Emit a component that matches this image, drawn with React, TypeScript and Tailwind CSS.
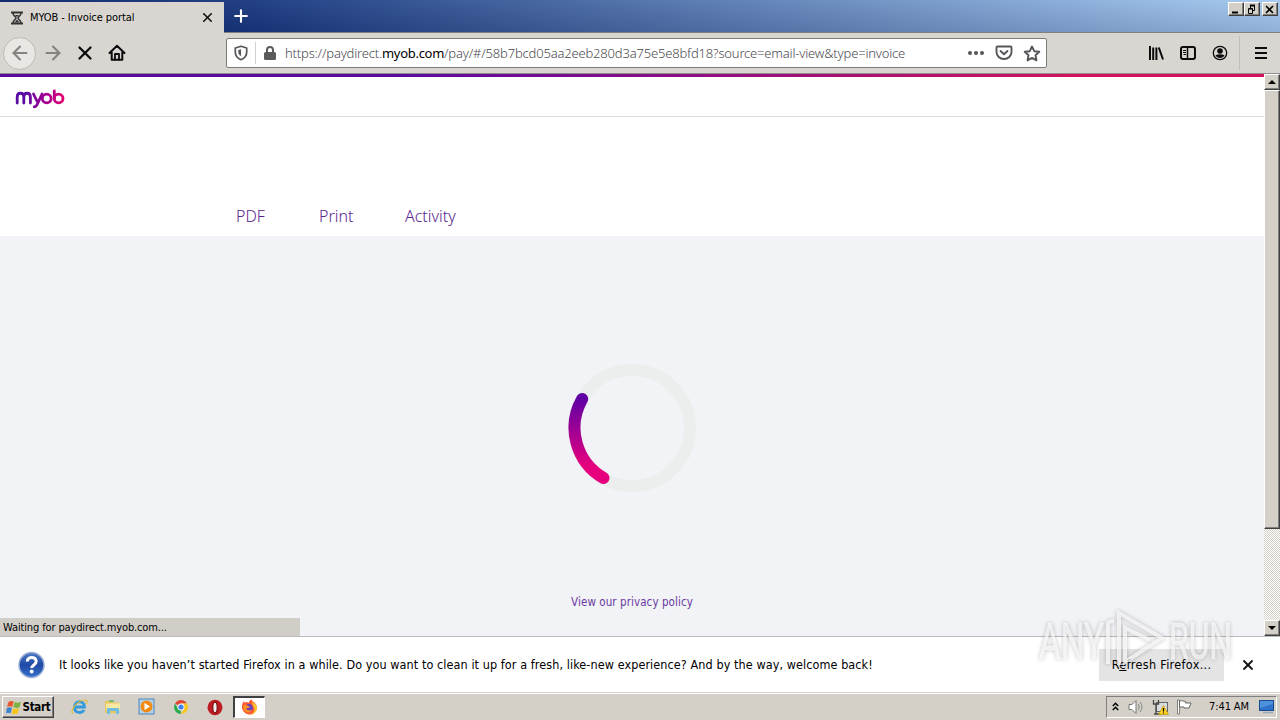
import type { ReactNode } from "react";
import { X, Plus, ArrowLeft, ArrowRight } from "lucide-react";

const NAV_LINKS = [
  { label: "PDF", className: "w-[83px]" },
  { label: "Print", className: "w-[86px]" },
  { label: "Activity", className: "w-[80px]" },
];

function RaisedButton({ className, children }: { className: string; children: ReactNode }) {
  return (
    <div
      className={`flex shrink-0 items-center justify-center border border-t-white border-l-white border-r-[#404040] border-b-[#404040] bg-[#d4d0c8] shadow-[inset_-1px_-1px_0_#808080] ${className}`}
    >
      {children}
    </div>
  );
}

function WindowControls() {
  return (
    <div className="flex pt-[2px] pr-[2px]">
      <RaisedButton className="h-[14px] w-4">
        <svg width="12" height="11" viewBox="0 0 12 11"><path d="M2 8.5h6" stroke="#000" strokeWidth="2" /></svg>
      </RaisedButton>
      <RaisedButton className="h-[14px] w-4">
        <svg width="12" height="11" viewBox="0 0 12 11" fill="none" stroke="#000">
          <path d="M4 1.5h5M4.500 1v3M8.500 1v5.500H7M2.500 5v4.500h4V4.500h-4M2 5h5" />
          <path d="M4 1.500h5" strokeWidth="2" />
        </svg>
      </RaisedButton>
      <RaisedButton className="ml-[2px] h-[14px] w-4">
        <svg width="12" height="11" viewBox="0 0 12 11"><path d="M2 2l7 7M9 2L2 9" stroke="#000" strokeWidth="1.700" /></svg>
      </RaisedButton>
    </div>
  );
}

function TabBar() {
  return (
    <div className="flex h-[33px] shrink-0 border-b border-[#808080] bg-[linear-gradient(180deg,rgba(255,255,255,0.04),rgba(0,0,40,0.13)),linear-gradient(90deg,#0a246a_0%,#1b3a80_20%,#a6caf0_100%)]">
      <div className="mt-[2px] flex h-[31px] w-[224px] items-center bg-[#d9d6d1] pr-[10px] pl-[10px]">
        <svg width="14" height="14" viewBox="0 0 14 14" fill="none" stroke="#333" className="shrink-0">
          <path d="M1 1.500h12M1 12.500h12" strokeWidth="2" />
          <path d="M3 2c0 3 3 3.500 3 5s-3 2-3 5M11 2c0 3-3 3.500-3 5s3 2 3 5" strokeWidth="1.500" />
          <path d="M5 4h4L7 6zM7 8.500l2.500 3h-5z" fill="#333" stroke="none" />
        </svg>
        <span className="ml-[6px] pt-px text-[11px] tracking-[-0.080px] whitespace-nowrap text-black">MYOB - Invoice portal</span>
        <X size={15} strokeWidth={2.600} className="mr-[-1px] mb-px ml-auto text-[#111]" />
      </div>
      <Plus size={20} strokeWidth={2.500} className="mt-[6px] ml-[7px] text-white" />
      <div className="ml-auto">
        <WindowControls />
      </div>
    </div>
  );
}

function AddressBar() {
  return (
    <div className="flex h-[30px] w-[821px] items-center rounded-[2px] border border-[#7b7b78] bg-white">
      <svg width="14" height="16" viewBox="0 0 14 16" fill="none" stroke="#55555a" strokeWidth="1.700" className="ml-[7px]">
        <path d="M7 1.300L12.700 3v4c0 4-2.500 6.400-5.700 7.700C3.800 13.400 1.300 11 1.300 7V3z" strokeLinejoin="round" />
        <path d="M7 4.200v7C5 10 4.300 8.600 4.300 7V5z" fill="#55555a" stroke="none" />
      </svg>
      <div className="ml-[7px] h-[22px] w-px bg-[#d0d0d0]" />
      <svg width="12" height="14" viewBox="0 0 12 14" className="ml-2">
        <rect y="6" width="12" height="8" rx="1.500" fill="#5a5a5c" />
        <path d="M3 7V4a3 3 0 016 0v3" fill="none" stroke="#5a5a5c" strokeWidth="2" />
      </svg>
      <span className="ml-[9px] pt-[2px] font-['Noto_Sans'] text-[13px] font-light tracking-[-0.175px] whitespace-nowrap text-[#4a4a50]">
        https://paydirect.<span className="font-normal tracking-[-0.300px] text-black">myob.com</span>
        /pay/#/58b7bcd05aa2eeb280d3a75e5e8bfd18?source=email-view&amp;type=invoice
      </span>
      <div className="mr-[5px] ml-auto flex shrink-0 items-center gap-[10px]">
        <svg width="18" height="6" viewBox="0 0 18 6" fill="#55555a">
          <circle cx="3" cy="3" r="2" /><circle cx="9" cy="3" r="2" /><circle cx="15" cy="3" r="2" />
        </svg>
        <svg width="18" height="16" viewBox="0 0 18 16" fill="none" stroke="#55555a" strokeWidth="1.900" strokeLinecap="round" strokeLinejoin="round">
          <path d="M2.500 1.500h13a1 1 0 011 1V7a7.500 7 0 01-15 0V2.500a1 1 0 011-1z" />
          <path d="M5.500 6L9 9.200 12.500 6" />
        </svg>
        <svg width="18" height="17" viewBox="0 0 18 17" fill="none" stroke="#55555a" strokeWidth="1.900" strokeLinejoin="round">
          <path d="M9 1.500l2.200 4.700 5.100.6-3.800 3.500 1 5.100L9 12.900l-4.500 2.500 1-5.100-3.800-3.500 5.100-.6z" />
        </svg>
      </div>
    </div>
  );
}

function Toolbar() {
  return (
    <div className="flex h-[41px] shrink-0 items-center border-b border-[#908e8a] bg-[#d9d6d1]">
      <div className="ml-[3px] flex size-[33px] items-center justify-center rounded-full border border-[#bdbab5] bg-[#e9e7e3]">
        <ArrowLeft size={22} strokeWidth={2.300} className="text-[#85837f]" />
      </div>
      <ArrowRight size={22} strokeWidth={2.300} className="ml-[6px] text-[#85837f]" />
      <X size={22} strokeWidth={2.500} className="ml-[10px] text-[#0c0c0d]" />
      <svg width="18" height="18" viewBox="0 0 18 18" fill="none" stroke="#0c0c0d" strokeWidth="2" strokeLinejoin="round" strokeLinecap="round" className="ml-3">
        <path d="M1.500 9L9 1.800 16.500 9M3.700 8.500v7.200h10.600V8.500" />
        <path d="M7 15.500V10h4v5.500" strokeWidth="1.800" />
      </svg>
      <div className="ml-[100px]">
        <AddressBar />
      </div>
      <svg width="16" height="16" viewBox="0 0 16 16" stroke="#0c0c0d" strokeWidth="2" className="ml-[101px]">
        <path d="M2 1v14M5.200 2.500V15M8.400 2.500V15M10.800 2.500L15 14.500" />
      </svg>
      <svg width="16" height="14" viewBox="0 0 16 14" fill="none" stroke="#0c0c0d" className="ml-4">
        <rect x="1" y="1" width="14" height="12" rx="2" strokeWidth="2" />
        <path d="M7.500 1v12" strokeWidth="1.500" />
        <path d="M3 4.500h3M3 6.500h3M3.500 8.500H6" strokeWidth="1" />
      </svg>
      <svg width="16" height="16" viewBox="0 0 16 16" className="ml-4">
        <circle cx="8" cy="8" r="6.700" fill="none" stroke="#0c0c0d" strokeWidth="1.300" />
        <circle cx="8" cy="6" r="2.800" fill="#0c0c0d" />
        <path d="M3.500 10.200C6 8.800 10 8.800 12.500 10.200 11.500 12 10 13 8 13s-3.500-1-4.500-2.800z" fill="#0c0c0d" />
      </svg>
      <div className="ml-[11px] h-[34px] w-px bg-[#c2bfb9]" />
      <svg width="12" height="12" viewBox="0 0 12 12" stroke="#0c0c0d" strokeWidth="2" className="ml-[15px]">
        <path d="M0 1h12M0 6h12M0 11h12" />
      </svg>
    </div>
  );
}

function Spinner() {
  return (
    <svg width="136" height="136" viewBox="0 0 136 136" fill="none" strokeWidth="12">
      <defs>
        <linearGradient id="arc" x1="0" y1="39" x2="0" y2="118" gradientUnits="userSpaceOnUse">
          <stop stopColor="#6100a5" />
          <stop offset="0.850" stopColor="#e6007e" />
        </linearGradient>
      </defs>
      <circle cx="68" cy="68" r="58" stroke="#eceeee" />
      <path d="M18.200 39A58 58 0 0039.500 118" stroke="url(#arc)" strokeLinecap="round" />
    </svg>
  );
}

function Scrollbar() {
  return (
    <div className="flex w-4 shrink-0 flex-col bg-[repeating-conic-gradient(#ffffff_0_25%,#d4d0c8_0_50%)] bg-[length:2px_2px]">
      <RaisedButton className="h-4 w-4">
        <svg width="8" height="4" viewBox="0 0 8 4"><path d="M0 4l4-4 4 4z" /></svg>
      </RaisedButton>
      <RaisedButton className="h-[439px] w-4">{null}</RaisedButton>
      <RaisedButton className="mt-auto h-4 w-4">
        <svg width="8" height="4" viewBox="0 0 8 4"><path d="M0 0l4 4 4-4z" /></svg>
      </RaisedButton>
    </div>
  );
}

function Page() {
  return (
    <div className="relative flex h-[562px] shrink-0">
      <main className="flex flex-1 flex-col bg-white">
        <div className="h-[3px] shrink-0 bg-[linear-gradient(90deg,#5b0aa0_0%,#5b0aa0_32%,#d0125f_84%,#d0125f_100%)]" />
        <header className="flex h-10 shrink-0 border-b border-[#dedede] pl-[15px]">
          <svg width="52" height="36" viewBox="0 0 52 36" fill="none" stroke="url(#logo)" strokeWidth="2.800" strokeLinecap="round" strokeLinejoin="round">
            <defs>
              <linearGradient id="logo" x1="0" y1="0" x2="50" y2="0" gradientUnits="userSpaceOnUse">
                <stop offset="0.200" stopColor="#5b0ba5" />
                <stop offset="0.600" stopColor="#a20092" />
                <stop offset="1" stopColor="#e6006e" />
              </linearGradient>
            </defs>
            <path d="M2.200 26v-6c0-5 6.600-5 6.600 0v6M8.800 20c0-5 6.600-5 6.600 0v6" />
            <path d="M18.500 17l4.200 8.500M27 17l-4.800 10.500c-.8 1.700-1.600 2.300-3 2.300" />
            <circle cx="31.700" cy="21.500" r="4.400" />
            <path d="M39.300 14v7.500" />
            <circle cx="43.600" cy="21.500" r="4.400" />
          </svg>
        </header>
        <nav className="flex h-[119px] shrink-0 items-end pb-[9px] pl-[236px] font-['Noto_Sans'] text-[16px] leading-[22px] font-light text-[#5a2590]">
          {NAV_LINKS.map((link) => (
            <a key={link.label} className={link.className}>{link.label}</a>
          ))}
        </nav>
        <section className="flex flex-1 flex-col items-center bg-[#f1f3f6] pt-[124px]">
          <Spinner />
          <a className="mt-[98px] text-[11.500px] leading-4 tracking-[0.080px] text-[#6a3aa0]">View our privacy policy</a>
        </section>
      </main>
      <Scrollbar />
      <div className="absolute bottom-0 left-0 flex h-[18px] w-[300px] items-center bg-[#d1cec7] pt-[3px] pl-[3px] text-[11px] tracking-[-0.130px] text-black">
        Waiting for paydirect.myob.com...
      </div>
    </div>
  );
}

function Notification() {
  return (
    <div className="flex h-[57px] shrink-0 items-center border-t border-[#bcbcbc] bg-white">
      <svg width="28" height="28" viewBox="0 0 28 28" className="ml-[18px]">
        <defs>
          <linearGradient id="help" x1="0" y1="0" x2="0" y2="1">
            <stop stopColor="#5179c4" /><stop offset="0.500" stopColor="#1e49a4" /><stop offset="1" stopColor="#3771cb" />
          </linearGradient>
        </defs>
        <circle cx="13.500" cy="14" r="12.500" fill="url(#help)" stroke="#9bb0d5" strokeWidth="1.500" />
        <path d="M9.200 10.500c.2-5.500 9-5.300 9 0 0 3.500-4.500 3.300-4.500 6.500" fill="none" stroke="#fff" strokeWidth="3" />
        <circle cx="13.700" cy="20.500" r="1.900" fill="#fff" />
      </svg>
      <span className="ml-[13px] pt-px text-[12.500px] tracking-[0.085px] whitespace-nowrap text-black">
        It looks like you haven’t started Firefox in a while. Do you want to clean it up for a fresh, like-new experience? And by the way, welcome back!
      </span>
      <button className="ml-auto h-8 w-[125px] shrink-0 bg-[#e4e4e4] text-[12.500px] tracking-[0.330px] text-black">
        R<span className="underline">e</span>fresh Firefox...
      </button>
      <X size={16} strokeWidth={2.700} className="mr-6 ml-4 shrink-0 text-[#111]" />
    </div>
  );
}

function QuickLaunch() {
  return (
    <div className="flex items-center pb-px">
      <svg width="18" height="18" viewBox="0 0 18 18" fill="none" className="ml-4">
        <path d="M4.500 9h10c0-7-10-7-10 0s7.500 6.500 9.500 2.800" stroke="#319bdc" strokeWidth="2.800" />
        <path d="M3 15.500C-1 14 7 2 15 2c3 0 2 2.500 1 4" stroke="#e2b735" strokeWidth="1.200" />
      </svg>
      <svg width="18" height="18" viewBox="0 0 18 18" className="ml-4">
        <path d="M1 3h6l1 1.500h7V15H1z" fill="#e8c65e" />
        <path d="M2 5.500h14V12H2z" fill="#f7e7a1" />
        <path d="M3 10h12v6h-3v-3H6v3H3z" fill="#70bde4" />
        <path d="M5 3h5" stroke="#5bb55d" strokeWidth="1.500" />
      </svg>
      <svg width="18" height="18" viewBox="0 0 18 18" className="ml-4">
        <rect x="1" y="1" width="15" height="15" fill="#b3d1e8" stroke="#4c86bd" />
        <circle cx="8.500" cy="8.500" r="6" fill="#f28b14" />
        <path d="M6.500 5v7l5.500-3.500z" fill="#fff" />
      </svg>
      <svg width="16" height="16" viewBox="0 0 16 16" className="ml-[17px]">
        <path d="M8 8L2 4.500A7 7 0 0114 4.500H8z" fill="#df4436" />
        <path d="M8 8l-.2 7A7 7 0 012 4.500l3 5z" fill="#2da94f" />
        <path d="M8 8V4.500h6A7 7 0 017.800 15l3.500-5.500z" fill="#f8c61c" />
        <circle cx="8" cy="8" r="3.500" fill="#fff" /><circle cx="8" cy="8" r="2.600" fill="#4382ec" />
      </svg>
      <svg width="16" height="17" viewBox="0 0 16 17" className="ml-[18px]">
        <ellipse cx="8" cy="8.500" rx="7.500" ry="7.700" fill="#bd1c22" />
        <ellipse cx="8" cy="8.500" rx="2.200" ry="5.300" fill="#eee" stroke="#7a0d10" strokeWidth="1.200" />
      </svg>
      <div className="ml-[10px] flex h-[22px] w-8 items-center justify-center border border-t-2 border-l-2 border-t-[#404040] border-l-[#404040] border-r-white border-b-white bg-white">
        <svg width="17" height="17" viewBox="0 0 17 17">
          <path d="M1 7c0-2 1-4 2-5l.8 2C5 2.500 6.500 2.700 7.500 4 8.500 1 10 .5 10.500.5c0 2 5.500 3 5.500 8.500a7.500 7.500 0 01-15-2z" fill="#ff5a35" />
          <path d="M10.500 1c1 3 5.500 4 5.500 8a7.500 7 0 01-8 7c5-1 7-5 4-9z" fill="#ffc42e" />
          <circle cx="8" cy="8.700" r="3.800" fill="#6943bb" />
          <path d="M2 7c2-2 4-1 5 0l2 .8c-1 1.800-2.500 1.200-4 1.800 1 2 4 2.500 6 1-1.500 4-7 3.500-8.500 0z" fill="#ff8f20" />
        </svg>
      </div>
    </div>
  );
}

function SystemTray() {
  return (
    <div className="mr-[3px] mb-px ml-auto flex h-[22px] w-[171px] items-center border border-t-[#808080] border-l-[#808080] border-r-white border-b-white">
      <svg width="7" height="10" viewBox="0 0 7 10" fill="none" stroke="#000" strokeWidth="1.500" className="ml-[5px]">
        <path d="M.8 4l2.700-2.700L6.200 4M.8 8l2.700-2.700L6.200 8" />
      </svg>
      <svg width="17" height="16" viewBox="0 0 17 16" className="ml-[9px]">
        <path d="M1 5.500h3l4-4v13l-4-4H1z" fill="#fff" stroke="#777" />
        <path d="M10 5c1.500 2 1.500 4 0 6M12 3c2.500 3 2.500 7 0 10" fill="none" stroke="#858585" />
      </svg>
      <svg width="17" height="16" viewBox="0 0 17 16" className="ml-[7px]">
        <rect x="4.500" y="3.500" width="11" height="9" fill="#d9dde0" stroke="#666" />
        <path d="M1.500 1v4h5V1M4 5v10M2 15h7" fill="none" stroke="#444" strokeWidth="1.300" />
        <path d="M11.500 6.500l5 9h-10z" fill="#ffd21f" stroke="#b18900" strokeWidth=".6" />
        <path d="M11.500 9v3.500M11.500 13.500v1" stroke="#000" strokeWidth="1.200" />
      </svg>
      <svg width="17" height="16" viewBox="0 0 17 16" className="ml-[7px]">
        <path d="M1.500 1h2v14h-2z" fill="#fff" stroke="#666" strokeWidth=".8" />
        <path d="M3.500 2c3-1 4 .5 6 .5v1.500h5.500l-2 5H8V8H3.500z" fill="#fff" stroke="#666" />
      </svg>
      <span className="ml-4 pt-px text-[11px] tracking-[-0.100px] whitespace-nowrap text-black">7:41 AM</span>
      <svg width="16" height="14" viewBox="0 0 16 14" className="mr-px ml-auto shrink-0">
        <rect x=".5" y=".5" width="14" height="10" fill="#2f70c8" stroke="#194b8f" />
        <path d="M1 1h13v3L1 8z" fill="#4e91dd" />
        <path d="M4 12.500h10" stroke="#98a9bc" strokeWidth="1.500" />
      </svg>
    </div>
  );
}

function Taskbar() {
  return (
    <div className="flex h-[27px] shrink-0 items-center border-t border-white bg-[#d4d0c8] pt-px shadow-[0_-1px_0_#d4d0c8]">
      <RaisedButton className="mb-px ml-[2px] h-[22px] w-[52px] gap-px">
        <svg width="16" height="15" viewBox="0 0 16 15" className="shrink-0">
          <path d="M2.500 2C4.500.5 6 .8 7.700 1.600L6.300 7C4.500 6 3 6 1 7z" fill="#e7562d" />
          <path d="M8.700 2c2 1 4 1 6.300-.2l-1.500 5.400C11.500 8.300 9.500 8 7.300 7z" fill="#7cb342" />
          <path d="M.8 8C3 7 4.300 7.200 6 8l-1.500 5.500C3 12.500 1.500 12.500 0 13.500z" fill="#3c83cf" />
          <path d="M7 8.200c2 1 4 1 6.200-.1l-1.500 5.300c-2 1-4 1-6.200 0z" fill="#f8c51f" />
        </svg>
        <span className="pt-px text-[11.500px] font-bold tracking-[-0.300px] text-black">Start</span>
      </RaisedButton>
      <QuickLaunch />
      <SystemTray />
    </div>
  );
}

function Watermark() {
  return (
    <svg width="204" height="66" viewBox="0 0 204 66" className="pointer-events-none absolute top-[604px] left-[1035px] drop-shadow-[0_0_2px_rgba(0,0,0,0.35)]">
      <g fill="#fff" fillOpacity="0.650" stroke="#fff" strokeOpacity="0.400" className="font-['Roboto'] text-[50px] font-normal">
        <text x="4" y="55" textLength="65" lengthAdjust="spacingAndGlyphs">ANY</text>
        <text x="134" y="55" textLength="63" lengthAdjust="spacingAndGlyphs">RUN</text>
      </g>
      <path d="M73 60V21q0-4 6-4M84 61V9l43 25-37 24V24l25 12" fill="none" stroke="#fff" strokeOpacity="0.700" strokeWidth="4" />
    </svg>
  );
}

export default function App() {
  return (
    <div className="relative flex h-[720px] w-[1280px] flex-col overflow-hidden bg-white font-['DejaVu_Sans_Condensed','DejaVu_Sans',sans-serif]">
      <TabBar />
      <Toolbar />
      <Page />
      <Notification />
      <Taskbar />
      <Watermark />
    </div>
  );
}
